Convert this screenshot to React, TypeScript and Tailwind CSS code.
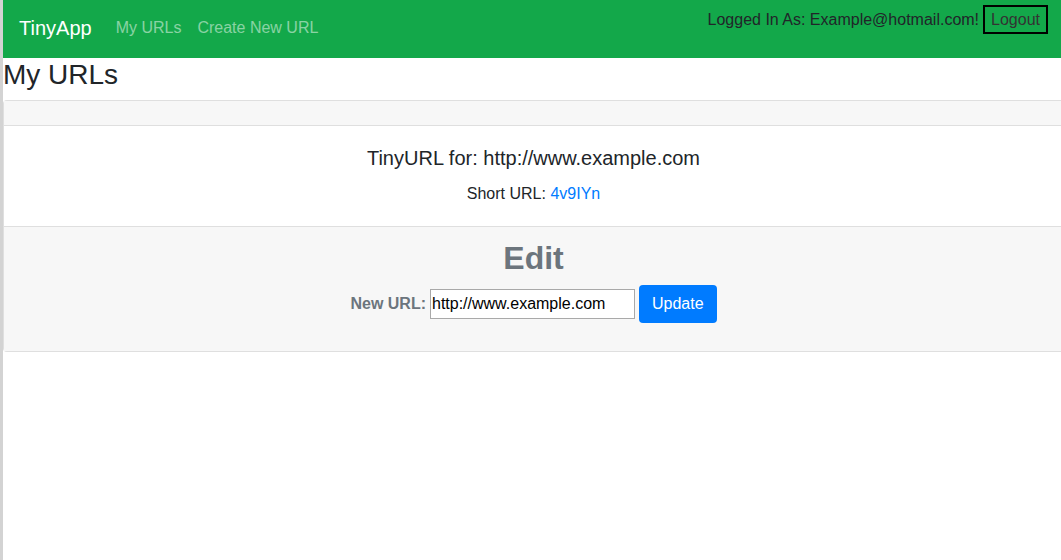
export default function App() {
  return (
    <div className="min-h-[560px] overflow-hidden border-l-[3px] border-[#d3d3d3] bg-white text-[#212529]" style={{ fontFamily: '"Liberation Sans", Arial, sans-serif' }}>
      <nav className="flex h-[58px] items-start justify-between bg-[#13a84a] pl-4 pr-[13px]">
        <div className="flex items-center pt-[13px]">
          <span className="text-[20px] leading-[30px] text-white">TinyApp</span>
          <span className="ml-6 text-[16px] leading-[30px] text-white/50">My URLs</span>
          <span className="ml-4 text-[16px] leading-[30px] text-white/50">Create New URL</span>
        </div>
        <div className="flex items-start pt-[5px]">
          <span className="mt-[5px] text-[16px] leading-[19px] text-[#212529]">Logged In As: Example@hotmail.com!</span>
          <span className="ml-[4px] border-2 border-black px-[6px] text-[16px] leading-[25px] text-[#333]">Logout</span>
        </div>
      </nav>
      <h3 className="mb-2 text-[28px] font-normal leading-[33.6px]">My URLs</h3>
      <div className="mr-[-2px] rounded-tl-[4px] rounded-bl-[4px] border border-r-0 border-[#dfdfdf]">
        <div className="h-[25px] border-b border-[#dfdfdf] bg-[#f7f7f7]"></div>
        <div className="p-5 text-center">
          <h5 className="mb-3 text-[20px] leading-[24px]">TinyURL for: http://www.example.com</h5>
          <p className="text-[16px] leading-[24px]">
            Short URL: <span className="text-[#007bff]">4v9IYn</span>
          </p>
        </div>
        <div className="border-t border-[#dfdfdf] bg-[#f7f7f7] px-5 py-3 text-center">
          <h2 className="mb-2 text-[32px] font-bold leading-[38px] text-[#6c757d]">Edit</h2>
          <div className="mb-4 flex items-center justify-center">
            <label className="mr-1 text-[16px] font-bold text-[#6c757d]">New URL:</label>
            <input
              readOnly
              value="http://www.example.com"
              className="h-[30px] w-[205px] border border-[#a9a9a9] bg-white px-[1px] text-[16px] text-black outline-none"
              style={{ fontFamily: '"Liberation Sans", Arial, sans-serif' }}
            />
            <button className="ml-1 h-[38px] rounded-[4px] bg-[#007bff] px-[13px] text-[16px] text-white">Update</button>
          </div>
        </div>
      </div>
    </div>
  );
}
